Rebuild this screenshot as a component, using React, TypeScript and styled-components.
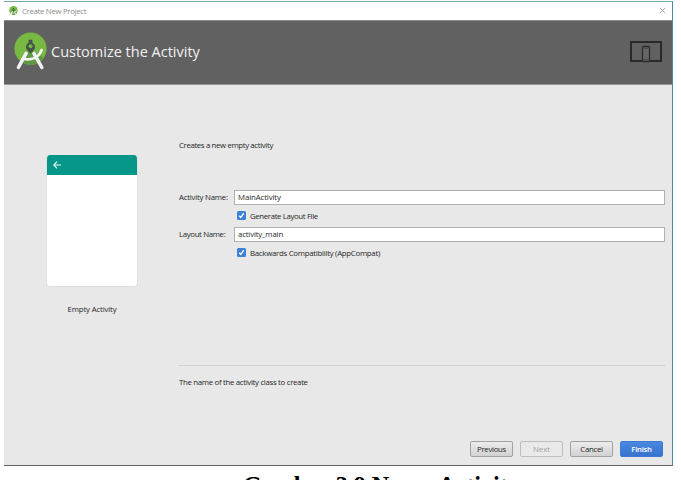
import React from "react";
import styled, { createGlobalStyle } from "styled-components";

const GlobalStyle = createGlobalStyle`
  * { box-sizing: border-box; }
  html, body { margin: 0; background: #fff; overflow: hidden; }
  body { font-family: "Open Sans", "Noto Sans", sans-serif; color: #262626; }
`;

const Page = styled.main`
  width: 681px;
  height: 480px;
  overflow: hidden;
  padding: 1px 0 0 4px;
  background: #fff;
`;

const Dialog = styled.section`
  width: 669px;
  height: 465px;
  display: flex;
  flex-direction: column;
  border-top: 1px solid #74a5a5;
  border-right: 1px solid #4d8799;
  border-bottom: 1px solid #606060;
  background: #e8e8e8;
  font-size: 7.8px;
  line-height: 12px;
  white-space: nowrap;
`;

const TitleBar = styled.header`
  height: 18px;
  display: flex;
  align-items: center;
  padding: 0 6px 1px 5px;
  background: #fff;
  color: #8c8c8c;
`;

const WindowTitle = styled.span`
  flex: 1;
  margin-left: 4px;
`;

const Banner = styled.div`
  height: 65px;
  display: flex;
  align-items: center;
  padding: 0 10px 3px 10px;
  background: #616161;
  border-top: 1px solid #8c8c8c;
  border-bottom: 1px solid #979797;
`;

const Heading = styled.h1`
  flex: 1;
  margin: 2px 0 0 4px;
  font-size: 14.5px;
  line-height: 20px;
  font-weight: 400;
  color: #f0f0f0;
`;

const Body = styled.div`
  flex: 1;
  display: flex;
`;

const Preview = styled.aside`
  width: 175px;
  padding: 70px 0 0 42px;
`;

const Phone = styled.div`
  width: 92px;
  height: 132px;
  background: #fff;
  border: 1px solid #e0e0e0;
  border-top: 0;
  border-radius: 4px;
  overflow: hidden;
`;

const AppBar = styled.div`
  height: 20px;
  margin: 0 -1px;
  padding: 6px 0 0 7px;
  background: #049688;
  line-height: 0;
`;

const PreviewLabel = styled.div`
  width: 92px;
  margin-top: 16px;
  text-align: center;
`;

const Form = styled.div`
  width: 486px;
  padding-top: 54px;
`;

const Description = styled.p`
  margin: 0 0 39px;
`;

const Field = styled.div`
  display: grid;
  grid-template-columns: 55px 431px;
  align-items: center;
  height: 15px;
`;

const Label = styled.label`
  padding-bottom: 1px;
`;

const Input = styled.div`
  height: 15px;
  padding: 0 3px;
  border: 1px solid #b0b0b0;
  background: #fff;
  line-height: 13px;
`;

const CheckRow = styled.div`
  height: 22px;
  display: flex;
  align-items: center;
  gap: 4px;
  padding: 0 0 1px 58px;
`;

const CheckBox = styled.span`
  width: 9px;
  height: 9px;
  display: flex;
  border-radius: 1.5px;
  background: #3e80d8;
`;

const Help = styled.div`
  margin-top: 101px;
  padding-top: 10px;
  border-top: 1px solid #d0d0d0;
`;

const Actions = styled.div`
  display: flex;
  justify-content: flex-end;
  gap: 7px;
  margin-top: 53px;
  padding-right: 2px;
`;

type Kind = "normal" | "disabled" | "primary";

const Button = styled.button<{ $kind?: Kind }>`
  width: 43px;
  height: 16px;
  padding: 0;
  font: inherit;
  line-height: 13px;
  border-radius: 2px;
  border: 1px solid ${(p) => (p.$kind === "primary" ? "#3d78d2" : p.$kind === "disabled" ? "#bdbdbd" : "#a2a2a2")};
  background: ${(p) =>
    p.$kind === "primary"
      ? "linear-gradient(#4987e0, #3872ce)"
      : p.$kind === "disabled"
        ? "#e9e9e9"
        : "linear-gradient(#ececec, #d2d2d2)"};
  color: ${(p) => (p.$kind === "primary" ? "#fff" : p.$kind === "disabled" ? "#a0a0a0" : "#262626")};
  font-weight: ${(p) => (p.$kind === "primary" ? 600 : 400)};
`;

const Caption = styled.p`
  margin: 6px 0 0 239px;
  font: bold 24.2px/28px "Liberation Serif", serif;
  letter-spacing: -0.04px;
  color: #000;
  white-space: nowrap;
`;

const Fit = styled.span<{ $track: number }>`
  letter-spacing: ${(p) => p.$track}px;
`;

const StudioLogo = ({ width, height }: { width: number; height: number }) => (
  <svg width={width} height={height} viewBox="0 0 34 39">
    <circle cx="17" cy="17" r="16.6" fill="#78b943" />
    <path d="M17 17 31 27A16.6 16.6 0 0 1 8 31Z" fill="#5f9841" />
    <path d="M15 8h4v3a5 5 0 0 1 2 7l-4 4-4-4a5 5 0 0 1 2-7Z" fill="#46554a" />
    <circle cx="17" cy="14.500" r="2" fill="#78b943" />
    <path d="M12.500 22 4.500 36.500M20.500 22l8.200 14.500" fill="none" stroke="#f3f3f3" strokeWidth="3.600" strokeLinecap="round" />
    <path d="M9 27.500c9 2 16.500-1 19.500-9" fill="none" stroke="#f3f3f3" strokeWidth="2.800" strokeLinecap="round" />
  </svg>
);

const Tick = () => (
  <svg width="9" height="9" viewBox="0 0 9 9">
    <path d="m2.200 4.700 1.600 1.700 3-4.300" fill="none" stroke="#fff" strokeWidth="1.300" />
  </svg>
);

export default function App() {
  return (
    <>
      <GlobalStyle />
      <Page>
        <Dialog>
          <TitleBar>
            <StudioLogo width={9} height={10} />
            <WindowTitle><Fit $track={-0.31}>Create New Project</Fit></WindowTitle>
            <svg width="7" height="7" viewBox="0 0 7 7">
              <path d="m.7.7 5.600 5.600M6.300.7.7 6.300" stroke="#999" strokeWidth=".8" />
            </svg>
          </TitleBar>
          <Banner>
            <StudioLogo width={33} height={38} />
            <Heading>Customize the Activity</Heading>
            <svg width="32" height="23" viewBox="0 0 32 23">
              <path d="M12 21H1V2h30v19H20" fill="none" stroke="#292929" strokeWidth="2" />
              <rect x="12.500" y="6.500" width="7" height="15" rx="1" fill="#666" stroke="#292929" strokeWidth="1.300" />
              <path d="M14 8.500h4M14 19.500h4" stroke="#414141" strokeWidth=".7" />
            </svg>
          </Banner>
          <Body>
            <Preview>
              <Phone>
                <AppBar>
                  <svg width="8" height="8" viewBox="0 0 8 8">
                    <path d="M4 .7.8 4 4 7.300M1 4h7" fill="none" stroke="#e8ffff" strokeWidth="1.100" />
                  </svg>
                </AppBar>
              </Phone>
              <PreviewLabel><Fit $track={-0.15}>Empty Activity</Fit></PreviewLabel>
            </Preview>
            <Form>
              <Description><Fit $track={-0.35}>Creates a new empty activity</Fit></Description>
              <Field>
                <Label><Fit $track={-0.22}>Activity Name:</Fit></Label>
                <Input><Fit $track={-0.1}>MainActivity</Fit></Input>
              </Field>
              <CheckRow>
                <CheckBox><Tick /></CheckBox>
                <Fit $track={-0.35}>Generate Layout File</Fit>
              </CheckRow>
              <Field>
                <Label><Fit $track={-0.34}>Layout Name:</Fit></Label>
                <Input><Fit $track={-0.16}>activity_main</Fit></Input>
              </Field>
              <CheckRow>
                <CheckBox><Tick /></CheckBox>
                <Fit $track={-0.26}>Backwards Compatibility (AppCompat)</Fit>
              </CheckRow>
              <Help><Fit $track={-0.3}>The name of the activity class to create</Fit></Help>
              <Actions>
                <Button><Fit $track={-0.3}>Previous</Fit></Button>
                <Button $kind="disabled">Next</Button>
                <Button><Fit $track={-0.3}>Cancel</Fit></Button>
                <Button $kind="primary"><Fit $track={-0.3}>Finish</Fit></Button>
              </Actions>
            </Form>
          </Body>
        </Dialog>
        <Caption>Gambar 3.9 Nama Activity</Caption>
      </Page>
    </>
  );
}
